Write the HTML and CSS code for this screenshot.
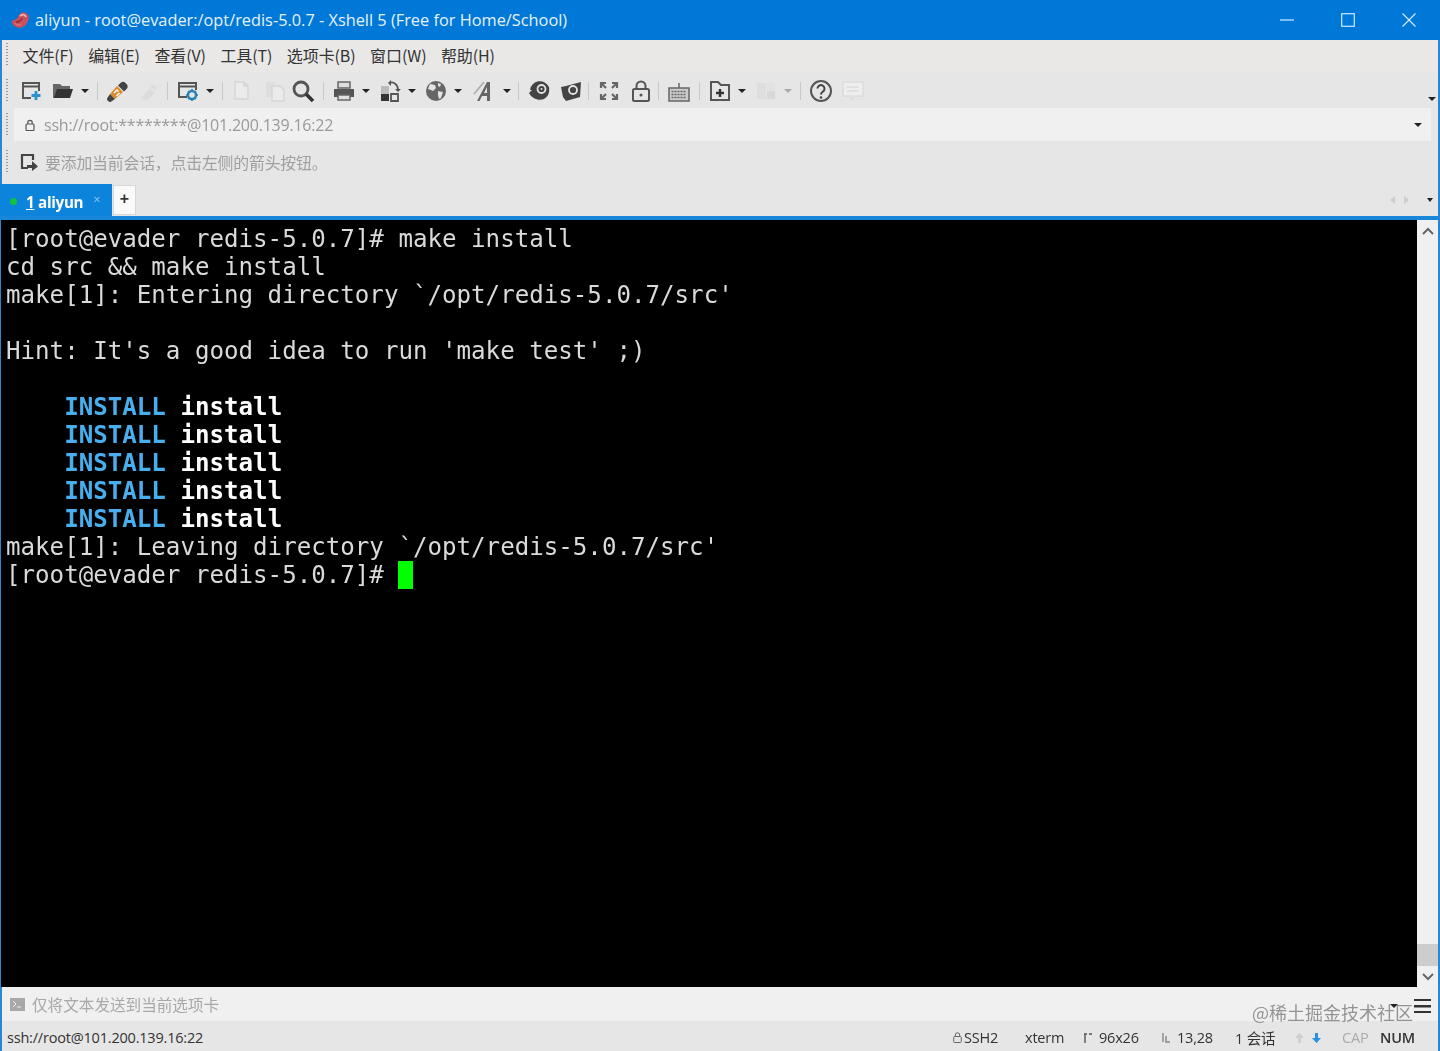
FILE: index.html
```html
<!DOCTYPE html>
<html lang="zh-CN">
<head>
<meta charset="utf-8">
<title>Xshell 5</title>
<link rel="stylesheet" href="styles.css">
</head>
<body>
<div class="window">
  <header class="titlebar">
    <svg class="app-logo" width="19" height="18" viewBox="0 0 19 18"><path d="M1 10c2-2 5-1 6-4 1-3 4-6 8-4 4 2 3 7 1 10-2 4-7 6-11 4C3 15 0 12 1 10z" fill="#c9505a"/><path d="M9 5c2-2 5-2 6 1" stroke="#f2b3b5" stroke-width="1.800" fill="none"/><path d="M5 11c3 0 5-1 6-4" stroke="#8d2b36" stroke-width="1.300" fill="none"/><path d="M4 12c1 2 4 3 6 1" stroke="#e88" stroke-width="1" fill="none"/></svg>
    <span class="title-text">aliyun - root@evader:/opt/redis-5.0.7 - Xshell 5 (Free for Home/School)</span>
    <div class="win-buttons">
      <svg width="14" height="14" viewBox="0 0 14 14"><path d="M0 7h14" stroke="#cfeaff" stroke-width="1.2"/></svg>
      <svg width="14" height="14" viewBox="0 0 14 14"><rect x=".7" y=".7" width="12.6" height="12.6" fill="none" stroke="#cfeaff" stroke-width="1.2"/></svg>
      <svg width="14" height="14" viewBox="0 0 14 14"><path d="M.5.5l13 13M13.5.5l-13 13" stroke="#cfeaff" stroke-width="1.2"/></svg>
    </div>
  </header>

  <nav class="bar menubar">
    <span class="grip"></span>
    <span class="menu-item">文件(F)</span>
    <span class="menu-item">编辑(E)</span>
    <span class="menu-item">查看(V)</span>
    <span class="menu-item">工具(T)</span>
    <span class="menu-item">选项卡(B)</span>
    <span class="menu-item">窗口(W)</span>
    <span class="menu-item">帮助(H)</span>
  </nav>

  <div class="bar toolbar">
    <span class="grip"></span>
    <svg class="tool" viewBox="0 0 24 24"><path d="M12 19H4V4h16v8M4 7.5h16" fill="none" stroke="#555" stroke-width="2"/><path d="M17 12v9M12.500 16.500h9" stroke="#2b8fd0" stroke-width="2.800"/></svg>
    <svg class="tool" viewBox="0 0 24 24"><path d="M2 5h7l2 2h8v3H7l-3 9H2z" fill="#666"/><path d="M6 10h16l-3 9H3z" fill="#333"/></svg>
    <span class="caret"></span>
    <span class="sep"></span>
    <svg class="tool" viewBox="0 0 24 24"><path d="M4 15l7-8 6 6-8 7z" fill="#e08a2e"/><path d="M14 4.500a3.500 3.500 0 0 1 5-1l2 2a3.500 3.500 0 0 1-1 5l-2 2-6-6z" fill="#444"/><path d="M4 15l5 5-3 2a2.500 2.500 0 0 1-4-4z" fill="#444"/><path d="M8 14l3-3 1.500 1.500M10.500 17l3-3" stroke="#fff" stroke-width="1.500" fill="none"/></svg>
    <svg class="tool" viewBox="0 0 24 24"><path d="M3 19l9-10 5 5-9 8zM15 5l4 4-2 3-5-5z" fill="#dcdcdc"/></svg>
    <span class="sep sep-tight"></span>
    <svg class="tool" viewBox="0 0 24 24"><path d="M11 18H3V4h17v7M3 7.500h17" fill="none" stroke="#555" stroke-width="2"/><circle cx="16" cy="16" r="4" fill="none" stroke="#2b7fb8" stroke-width="2.500"/><path d="M16 10v2M16 20v2M10 16h2M20 16h2M12 12l1.500 1.500M18.500 18.500L20 20M20 12l-1.500 1.500M13.500 18.500L12 20" stroke="#2b7fb8" stroke-width="1.500"/></svg>
    <span class="caret"></span>
    <span class="sep"></span>
    <svg class="tool" viewBox="0 0 24 24"><path d="M4 3h9l4 4v13H4z" fill="#ebebeb" stroke="#d6d6d6" stroke-width="1.500"/><path d="M13 3v4h4" fill="none" stroke="#d6d6d6" stroke-width="1.500"/></svg>
    <svg class="tool" viewBox="0 0 24 24"><path d="M3 3h9v15H3z" fill="#dedede"/><path d="M9 7h8l4 4v11H9z" fill="#ebebeb" stroke="#d6d6d6" stroke-width="1.500"/></svg>
    <svg class="tool tool-pull" viewBox="0 0 24 24"><circle cx="10" cy="10" r="7" fill="none" stroke="#555" stroke-width="2.800"/><path d="M15 15l7 7" stroke="#333" stroke-width="3.500"/></svg>
    <span class="sep"></span>
    <svg class="tool" viewBox="0 0 24 24"><path d="M6 3h12v6H6z" fill="#ddd" stroke="#666" stroke-width="1.500"/><path d="M2 10h20v8H2z" fill="#555"/><path d="M6 16h12v5H6z" fill="#ddd" stroke="#666" stroke-width="1.500"/></svg>
    <span class="caret"></span>
    <svg class="tool" viewBox="0 0 24 24"><path d="M3 7h8v8H3z" fill="#bbb"/><path d="M3 15h8v7H3z" fill="#333"/><path d="M13 15h7v7h-7z" fill="none" stroke="#555" stroke-width="1.800"/><path d="M11 4c5-2 9 2 9 7" fill="none" stroke="#555" stroke-width="1.800"/><path d="M10 4l3-3v6zM17 10h6l-3 3z" fill="#555"/></svg>
    <span class="caret"></span>
    <svg class="tool" viewBox="0 0 24 24"><circle cx="12" cy="12" r="10" fill="#666"/><path d="M6 5l5 1 1 3-3 3-2-1-3-1zM14 12l5 1-2 6-2 1-1-4zM14 4l3 1-1 3-2-1z" fill="#e4e4e4"/></svg>
    <span class="caret"></span>
    <svg class="tool tool-push" viewBox="0 0 24 24"><path d="M4 22L14 3h3v19h-3v-5H9l-2.500 5zM11 14h3V8z" fill="#666" fill-rule="evenodd"/><path d="M1 15L11 3" stroke="#aaa" stroke-width="1.500"/></svg>
    <span class="caret"></span>
    <span class="sep sep-nudge"></span>
    <svg class="tool" viewBox="0 0 24 24"><path d="M3 11a10 10 0 0 1 19-3c1 5-1 10-5 12-5 2-12 0-15-6l3-3z" fill="#444"/><circle cx="14.500" cy="10" r="4" fill="none" stroke="#e4e4e4" stroke-width="1.800"/><circle cx="14.500" cy="10" r="1" fill="#e4e4e4"/></svg>
    <svg class="tool" viewBox="0 0 24 24"><path d="M2 8l5-1 15-4-1 15-14 4-3-4z" fill="#444"/><circle cx="14" cy="11" r="4" fill="none" stroke="#e4e4e4" stroke-width="1.800"/></svg>
    <span class="sep sep-tight"></span>
    <svg class="tool" viewBox="0 0 24 24"><path d="M4 9V4h5M15 4h5v5M20 15v5h-5M9 20H4v-5" fill="none" stroke="#666" stroke-width="2.200"/><path d="M5 5l4 4M19 5l-4 4M19 19l-4-4M5 19l4-4" stroke="#666" stroke-width="2.200"/></svg>
    <svg class="tool" viewBox="0 0 24 24"><rect x="4" y="10" width="16" height="12" rx="1.500" fill="none" stroke="#555" stroke-width="2"/><path d="M7.500 10V7a4.500 4.500 0 0 1 9 0v3" fill="none" stroke="#555" stroke-width="2"/><circle cx="12" cy="16" r="1.500" fill="#555"/></svg>
    <span class="sep sep-tight"></span>
    <svg class="tool" viewBox="0 0 24 24"><rect x="2" y="9" width="20" height="13" fill="#ccc" stroke="#666" stroke-width="1.500"/><path d="M4.500 12.500h15M4.500 15.500h15M4.500 18.500h15" stroke="#666" stroke-width="1.500" stroke-dasharray="2 1"/><path d="M12 9V4" stroke="#666" stroke-width="1.500"/></svg>
    <span class="sep"></span>
    <svg class="tool" viewBox="0 0 24 24"><path d="M3 3h7l3 3h8v15H3z" fill="none" stroke="#555" stroke-width="2"/><path d="M12 10v8M8 14h8" stroke="#333" stroke-width="2.500"/></svg>
    <span class="caret"></span>
    <svg class="tool" viewBox="0 0 24 24"><path d="M3 4h9v16H3z" fill="#dedede"/><path d="M13 4h8v7h-8z" fill="#e2e2e2"/><path d="M13 12h8v8h-8z" fill="#d8d8d8"/></svg>
    <span class="caret caret-dim"></span>
    <span class="sep"></span>
    <svg class="tool" viewBox="0 0 24 24"><circle cx="12" cy="12" r="10" fill="none" stroke="#555" stroke-width="2"/><path d="M8.500 9.500a3.500 3.500 0 1 1 5.500 3c-1.500 1-2 1.500-2 3" fill="none" stroke="#444" stroke-width="2"/><circle cx="12" cy="18.500" r="1.300" fill="#444"/></svg>
    <svg class="tool" viewBox="0 0 24 24"><path d="M2 3h20v14h-8l-3 4v-4H2z" fill="#eee" stroke="#dcdcdc" stroke-width="1.500"/><path d="M6 8h12M6 12h12" stroke="#dcdcdc" stroke-width="1.500"/></svg>
    <span class="corner-caret"><span class="caret"></span></span>
  </div>

  <div class="bar addressbar">
    <span class="grip"></span>
    <div class="address-field">
      <svg width="10" height="12" viewBox="0 0 10 12"><rect x="1" y="5" width="8" height="6.500" rx="1" fill="none" stroke="#555" stroke-width="1.200"/><path d="M2.800 5V3.500a2.200 2.200 0 0 1 4.400 0V5" fill="none" stroke="#555" stroke-width="1.200"/></svg>
      <span class="address-text">ssh://root:********@101.200.139.16:22</span>
      <span class="caret field-caret"></span>
    </div>
  </div>

  <div class="bar hintbar">
    <span class="grip"></span>
    <svg width="18" height="18" viewBox="0 0 18 18"><path d="M8 15H2V2h11v5" fill="none" stroke="#444" stroke-width="2.200"/><path d="M7 12h5V8l6 5.500-6 4.500v-3H7z" fill="#444"/></svg>
    <span class="hint-text">要添加当前会话，点击左侧的箭头按钮。</span>
  </div>

  <div class="tabbar">
    <div class="tab">
      <span class="tab-dot"></span>
      <span class="tab-label"><u>1</u> aliyun</span>
      <span class="tab-close">×</span>
    </div>
    <div class="tab-add">+</div>
    <div class="tab-nav">
      <span class="arrow-left"></span>
      <span class="arrow-right"></span>
      <span class="caret"></span>
    </div>
  </div>

  <main class="terminal-area">
<pre class="terminal">[root@evader redis-5.0.7]# make install
cd src &amp;&amp; make install
make[1]: Entering directory `/opt/redis-5.0.7/src'

Hint: It's a good idea to run 'make test' ;)

    <b class="kw">INSTALL</b> <b>install</b>
    <b class="kw">INSTALL</b> <b>install</b>
    <b class="kw">INSTALL</b> <b>install</b>
    <b class="kw">INSTALL</b> <b>install</b>
    <b class="kw">INSTALL</b> <b>install</b>
make[1]: Leaving directory `/opt/redis-5.0.7/src'
[root@evader redis-5.0.7]# <span class="cursor"> </span></pre>
    <div class="scrollbar">
      <svg width="14" height="10" viewBox="0 0 14 10"><path d="M2 8l5-5 5 5" fill="none" stroke="#666" stroke-width="2"/></svg>
      <div class="scroll-track"><div class="scroll-thumb"></div></div>
      <svg width="14" height="10" viewBox="0 0 14 10"><path d="M2 2l5 5 5-5" fill="none" stroke="#666" stroke-width="2"/></svg>
    </div>
  </main>

  <div class="sendbar">
    <svg width="15" height="13" viewBox="0 0 15 13"><rect width="15" height="13" fill="#a8a8a8"/><path d="M3 3l3 3-3 3M7 9h4" stroke="#eee" fill="none"/></svg>
    <span class="send-text">仅将文本发送到当前选项卡</span>
    <span class="send-menu"><span class="caret"></span><span class="hamburger"></span></span>
  </div>

  <footer class="statusbar">
    <span class="status-path">ssh://root@101.200.139.16:22</span>
    <span class="status-item status-ssh"><svg width="9" height="11" viewBox="0 0 9 11"><rect x=".7" y="4.500" width="7.600" height="6" rx="1" fill="none" stroke="#666"/><path d="M2.300 4.500V3a2.200 2.200 0 0 1 4.400 0v1.500" fill="none" stroke="#666"/></svg>SSH2</span>
    <span class="status-item status-term">xterm</span>
    <span class="status-item status-size"><svg width="10" height="11" viewBox="0 0 10 11"><path d="M2 11V2M1 2h3M6 2h3" stroke="#555" stroke-width="1.400"/></svg>96x26</span>
    <span class="status-item status-pos"><svg width="10" height="11" viewBox="0 0 10 11"><path d="M2 1v9M5 4v6h4" stroke="#888" stroke-width="1.400" fill="none"/></svg>13,28</span>
    <span class="status-item status-sess">1 会话</span>
    <span class="status-arrows">
      <svg width="11" height="12" viewBox="0 0 11 12"><path d="M5.500 1L10 6H7v5H4V6H1z" fill="#cfcfcf"/></svg>
      <svg width="11" height="12" viewBox="0 0 11 12"><path d="M5.500 11L10 6H7V1H4v5H1z" fill="#2a8fe0"/></svg>
    </span>
    <span class="status-item status-cap">CAP</span>
    <span class="status-item status-num">NUM</span>
  </footer>
  <span class="watermark">@稀土掘金技术社区</span>
</div>
</body>
</html>
```
FILE: styles.css
```css
* { box-sizing: border-box; }
html, body { margin: 0; height: 100%; overflow: hidden; background: #e6e6e6; }
body { font-family: "Open Sans", "Noto Sans CJK SC", sans-serif; }

.window {
  position: relative;
  display: flex;
  flex-direction: column;
  height: 1051px;
  border-left: 2px solid #2a86d4;
  border-right: 2px solid #2a86d4;
  filter: blur(0.45px);
}

.titlebar {
  display: flex;
  align-items: center;
  height: 40px;
  margin: 0 -2px;
  padding: 0 0 1px 11px;
  background: #0078d7;
  color: #e6f3ff;
  flex: none;
}
.app-logo { flex: none; }
.title-text { margin-left: 5px; font-size: 16.340px; white-space: nowrap; }
.win-buttons { margin-left: auto; margin-right: 24px; display: flex; gap: 47px; align-items: center; }

.bar { display: flex; align-items: center; flex: none; padding-left: 4px; background: #e6e6e6; }
.grip {
  flex: none;
  width: 2px;
  height: 24px;
  background: repeating-linear-gradient(to bottom, #999 0 1px, transparent 1px 3px);
}

.menubar { height: 32px; padding-bottom: 2px; background: #e9e8e7; color: #333; font: 16px "Noto Sans CJK SC", sans-serif; }
.menubar .menu-item { margin-left: 14.500px; white-space: nowrap; letter-spacing: -0.1px; }
.menubar .menu-item:first-of-type { margin-left: 13px; }

.toolbar { position: relative; height: 36px; padding-top: 1px; gap: 8px; }
.toolbar .grip { margin-right: 3px; }
.tool { flex: none; width: 24px; height: 24px; }
.tool-pull { margin-left: -4px; }
.tool-push { margin-left: 3px; }
.caret {
  flex: none;
  width: 0;
  height: 0;
  border-left: 4px solid transparent;
  border-right: 4px solid transparent;
  border-top: 4px solid #222;
}
.toolbar > .caret { margin-left: -2px; }
.caret-dim { border-top-color: #aaa; }
.sep { flex: none; width: 1px; height: 18px; background: #c9c9c9; }
.sep-tight { margin-left: -3px; }
.sep-nudge { margin-left: -1px; }
.corner-caret { position: absolute; right: 2px; bottom: 7px; display: flex; }

.addressbar { height: 33px; }
.address-field {
  display: flex;
  align-items: center;
  flex: 1;
  height: 33px;
  margin: 0 7px 0 6px;
  padding: 0 9px 0 11px;
  background: #f0f0f0;
  color: #999;
  font-size: 16px;
}
.address-text { margin-left: 9px; letter-spacing: -0.22px; }
.field-caret { margin-left: auto; }

.hintbar { height: 43px; padding-bottom: 1px; color: #a0a0a0; font: 15.900px "Noto Sans CJK SC", sans-serif; }
.hintbar svg { margin-left: 12px; flex: none; }
.hint-text { margin-left: 7px; letter-spacing: -0.2px; }

.tabbar {
  display: flex;
  align-items: flex-end;
  flex: none;
  height: 36px;
  margin-left: -2px;
  background: #e6e6e6;
  border-bottom: 4px solid #1a86d9;
}
.tab {
  display: flex;
  align-items: center;
  width: 112px;
  height: 32px;
  padding: 3px 0 0 10px;
  background: #0d84dc;
  color: #fff;
}
.tab-dot { width: 7px; height: 7px; border-radius: 50%; background: #12c43a; }
.tab-label { margin-left: 9px; font-size: 15.200px; font-weight: 700; letter-spacing: -0.3px; }
.tab-close { margin: 0 0 6px 10px; font-size: 13px; color: #8ec4ee; }
.tab-add {
  width: 23px;
  height: 30px;
  margin: 0 0 1px 1px;
  background: #fafafa;
  border: 1px solid #d8d8d8;
  text-align: center;
  font: 700 16px/26px "Liberation Sans", sans-serif;
  color: #333;
}
.tab-nav { margin-left: auto; margin-right: 5px; display: flex; align-items: center; gap: 9px; height: 32px; }
.arrow-left { width: 0; height: 0; border: 4px solid transparent; border-left: 0; border-right: 5px solid #ccc; }
.arrow-right { width: 0; height: 0; border: 4px solid transparent; border-right: 0; border-left: 5px solid #ccc; }
.tab-nav .caret { margin-left: 9px; border-width: 4px 3px 0; }

.terminal-area { display: flex; flex: none; height: 767px; background: #000; margin-left: -1px; }
.terminal {
  flex: 1;
  margin: 0;
  padding: 5px 0 0 5px;
  overflow: hidden;
  background: #000;
  color: #dadada;
  font: 24.150px/28px "DejaVu Sans Mono", monospace;
}
.terminal b { color: #fff; font-weight: 700; }
.terminal .kw { color: #48aeee; }
.cursor { display: inline-block; background: #00ff00; }

.scrollbar {
  flex: none;
  width: 21px;
  display: flex;
  flex-direction: column;
  align-items: center;
  padding: 6px 0 5px;
  background: #f0f0f0;
}
.scroll-track { flex: 1; width: 100%; display: flex; align-items: flex-end; padding-bottom: 6px; }
.scroll-thumb { width: 100%; height: 22px; background: #cdcdcd; }

.sendbar {
  position: relative;
  display: flex;
  align-items: center;
  flex: none;
  height: 34px;
  padding-left: 8px;
  background: #f0f0f0;
  color: #a8a8a8;
  font: 15.600px "Noto Sans CJK SC", sans-serif;
}
.send-text { margin-left: 7px; }
.send-menu { position: absolute; right: 7px; top: 12px; display: flex; gap: 16px; align-items: flex-start; }
.send-menu .caret { margin-top: 5px; }
.hamburger {
  width: 17px;
  height: 14px;
  border-top: 2.500px solid #333;
  border-bottom: 2.500px solid #333;
  background: linear-gradient(#333, #333) center / 100% 2.500px no-repeat;
}

.statusbar {
  position: relative;
  display: flex;
  align-items: center;
  flex: none;
  height: 30px;
  padding: 3px 34px 0 5px;
  background: #e6e6e6;
  color: #333;
  font-size: 14.500px;
  letter-spacing: -0.2px;
  white-space: nowrap;
}
.status-path { flex: 1; }
.status-item { display: inline-flex; align-items: center; gap: 4px; }
.status-ssh { width: 72px; gap: 2px; }
.status-term { width: 58px; }
.status-size { width: 78px; gap: 6px; }
.status-pos { width: 74px; gap: 6px; }
.status-sess { width: 59px; }
.status-arrows { display: inline-flex; gap: 6px; width: 48px; }
.status-cap { width: 38px; color: #aaa; }
.status-num { width: 24px; font-weight: 600; }

.watermark {
  position: absolute;
  right: 25px;
  top: 999px;
  color: rgba(90, 90, 90, 0.62);
  font: 18px "Noto Sans CJK SC", sans-serif;
  white-space: nowrap;
}
```
